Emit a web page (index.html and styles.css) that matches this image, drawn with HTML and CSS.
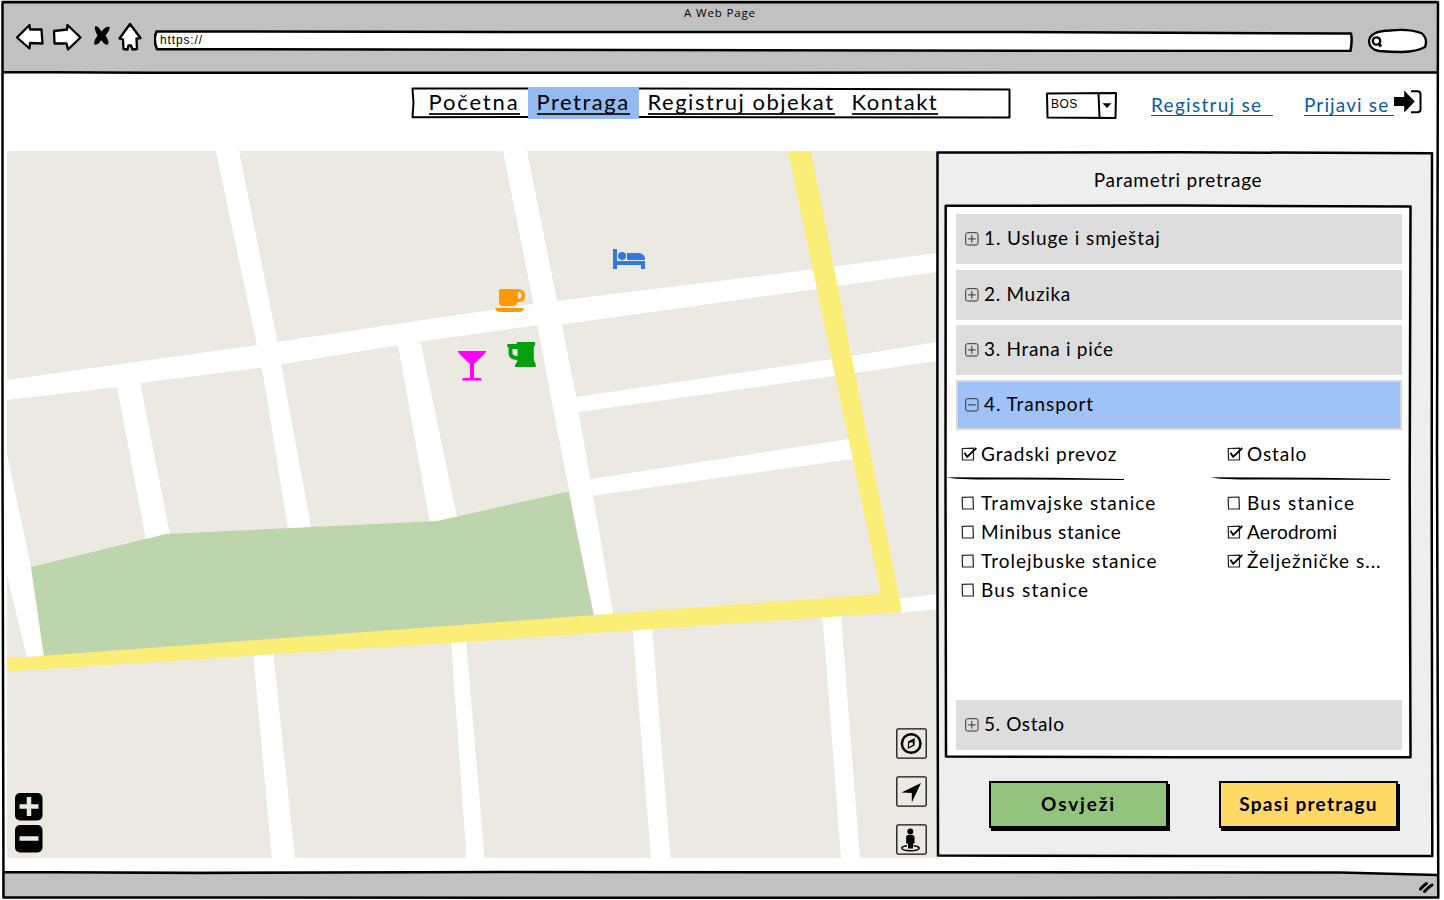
FILE: index.html
```html
<!DOCTYPE html>
<html lang="bs">
<head>
<meta charset="utf-8">
<title>A Web Page</title>
<link rel="stylesheet" href="styles.css">
</head>
<body>
<svg class="defs" width="0" height="0" aria-hidden="true">
  <symbol id="plus" viewBox="0 0 14 14"><rect x=".7" y=".7" width="12.300" height="12.300" rx="1.8"/><path d="M6.800 3v7.800M2.900 6.900h7.800"/></symbol>
  <symbol id="minus" viewBox="0 0 14 14"><rect x=".7" y=".7" width="12.300" height="12.300" rx="1.8"/><path d="M2.900 6.900h7.800"/></symbol>
  <symbol id="box" viewBox="0 0 16 16"><path d="M1.2 2.3 12 2l.4 12L1.5 13.8Z"/></symbol>
  <symbol id="checked" viewBox="0 0 16 16"><path d="M1.2 2.5 12.4 2.2 12.5 14 1.5 13.8Z"/><path class="tick" d="M3.4 6.7 6.2 10.8 15.300 2"/></symbol>
</svg>

<div class="window">
  <header class="chrome">
    <div class="chrome-title">A Web Page</div>
    <div class="toolbar">
      <svg class="nav-icons" width="130" height="32" viewBox="14 21 130 32">
        <path d="M17 37.500 29.500 25 30 29.500 41.500 29.500 42.500 43.500 30 43 29.500 48.500Z"/>
        <path d="M54 31 67 29.500 67.500 25 80.500 37.500 68 49.500 66.500 43.500 54.500 43.500Z"/>
        <path class="solid" d="M95 26.500Q98 25.500 101.500 31.500 106 25.500 109.500 27 110.500 29 105.500 35.500 109.500 41 108 44.500 104.500 45.500 101.300 40 98 45.500 94.500 44.500 93 42 97.500 35.500 94 29 95 26.500Z"/>
        <path d="M130 24 140.500 38 136.500 38.500 137 49 132.500 49.500 131 45.500 128.500 45.500 127.500 49.500 123.500 49 123 39.500 119.500 38.500Z"/>
      </svg>
      <div class="address">
        <span>https://</span>
        <svg class="sketch" viewBox="154 30 1199 22"><path class="corner" d="M600 30H1353V33.500L1000 32 600 32Z"/><path class="ink" d="M156 31.800 157 31.500 600 32 1000 32 1351 33.500Q1352.500 40 1350.500 51L900 50.500 157 49.200Q153 40 156.500 31.500"/></svg>
      </div>
      <svg class="finder" width="62" height="26" viewBox="1367 28 62 26">
        <path class="pill" d="M1369 41Q1370 31 1390 30.500 1410 28.500 1422 33.500 1428 39 1425 47 1417 51.500 1402 52 1390 52 1379 51 1369 49 1369 41Z"/>
        <circle cx="1376.500" cy="41" r="3.700"/><path class="handle" d="M1378.500 43.500 1381 46.500"/>
      </svg>
    </div>
  </header>

  <div class="topbar">
    <nav class="menu">
      <a><span class="tr20">Početna</span></a>
      <a class="active"><span class="tr16">Pretraga</span></a>
      <a><span class="tr16">Registruj objekat</span></a>
      <a><span class="tr16">Kontakt</span></a>
      <svg class="sketch" viewBox="411 87 600 32"><path class="ink2" d="M528 88.500H412.500L413.500 103 412.500 117.300 528 117M639 88.500 1009.500 89.500 1009.500 117.500 639 117"/></svg>
    </nav>
    <div class="language">
      <span>BOS</span>
      <svg class="sketch" viewBox="1046 92 71 27"><path class="ink2" d="M1047 93.500 1116 93 1115.500 118 1047.500 117.500ZM1098.500 93.500 1099.500 117.500"/><path d="M1102.500 103.200h9l-4.500 4.800z"/></svg>
    </div>
    <a class="link register tr13">Registruj se</a>
    <a class="link login tr11">Prijavi se</a>
    <svg class="login-icon" width="30" height="26" viewBox="1393 89 30 26"><path d="M1394 97h10.200v-6.500L1414.800 101.500 1404.200 112.500V106H1394Z"/><path class="bracket" d="M1411 91.300h6.500q3 0 3 3v15q0 3-3 3H1411"/></svg>
  </div>

  <main class="main">
    <section class="map">
      <svg width="930" height="707" viewBox="7 151 930 707">
        <rect class="land" x="7" y="151" width="930" height="707"/>
        <g class="road">
          <path d="M216 151H239L277 340 284 380 311 527 309 532H288.500L264 380 257 345Z"/>
          <path d="M503 151H527L557 301 576 396 613 613V618H594L551.500 400 533.500 304Z"/>
          <path d="M7 380 257 345 440 317.500 533 304 670 287 816 269 937 253V272L819 288.500 670 309.500 561 324.500 538 325 420 341.500 262 367.500 140 383 117 387 7 400Z"/>
          <path d="M117 386 140 382 170 535 166 540H146Z"/>
          <path d="M398 345 420 340 457 517 450 523H430Z"/>
          <path d="M7 454 31 567 46 660H27.500L7 575Z"/>
          <path d="M573 397.500 833 359 937 342V361L838 375.500 575 412.500Z"/>
          <path d="M588 479.500 849 439 868 445 872 458 853 459 594 495.500Z"/>
          <path d="M896 599 937 594V609L900 613Z"/>
          <path d="M253 652H273L295 858H272Z"/>
          <path d="M451 640H466L484.500 858H466.500Z"/>
          <path d="M632.500 628H652L670.500 858H651Z"/>
          <path d="M822.500 616H841L860 858H841Z"/>
        </g>
        <path class="park" d="M31 567 166 534 437 521 568.500 491.500 594 616 44 657Z"/>
        <path class="highway" d="M788 151H811L902 612 480 641 7 671.500V658.500L480 623.500 881 594Z"/>
        <g fill="#2f78e3"><path d="M613 249h4v12h28v8h-4v-4h-24v4h-4z"/><circle cx="622" cy="256" r="4"/><path d="M627 253h11q7 0 7 7h-18z"/></g>
        <path fill="#ff9900" fill-rule="evenodd" d="M499 291q0-2 2-2h16q8 0 8 6.700t-8 6.500q0 3.800-4 3.800h-10q-4 0-4-4zM518 292v7q3.500 0 3.500-3.500t-3.500-3.500zM495 308h29q-1 4-5 4h-19q-4 0-5-4z"/>
        <path fill="#04a010" fill-rule="evenodd" d="M507.300 344h9.500v-2H535v4h-1.200v14.500q2.200 2 2.200 6.500h-21q0-4 2.200-5v-2Q508 360 508.500 352v-5h-1.200zM512.500 349v4q0 3 5 3v-7z"/>
        <path fill="#ff00ff" d="M457.500 351h29q-1 2.500-12.500 13v14h6.500q1 0 1 2.500h-19.200q0-2.500 1-2.500h6.700V364Q458.500 353.500 457.500 351z"/>
      </svg>
      <div class="zoom">
        <svg width="28" height="28" viewBox="0 0 28 28"><rect width="27.500" height="27.500" rx="5"/><path d="M4.500 13.500h19M14 4v19"/></svg>
        <svg width="28" height="28" viewBox="0 0 28 28"><rect width="27.500" height="27.500" rx="5"/><path d="M4.500 13.500h19"/></svg>
      </div>
      <div class="tools">
        <svg width="31" height="31" viewBox="0 0 31 31"><rect class="tile" x=".8" y=".8" width="29.400" height="29.400" rx="1.500"/><circle class="ring" cx="15.200" cy="15.500" r="9.300"/><path fill-rule="evenodd" d="M18.800 10 18.500 17.500 11.800 21 12 13.500ZM16.500 14l-3.300 1-.2 4 4-2.200z"/></svg>
        <svg width="31" height="31" viewBox="0 0 31 31"><rect class="tile" x=".8" y=".8" width="29.400" height="29.400" rx="1.500"/><path d="M25 7 15.800 26.500V17L5.500 16.500Z"/></svg>
        <svg width="31" height="31" viewBox="0 0 31 31"><rect class="tile" x=".8" y=".8" width="29.400" height="29.400" rx="1.500"/><circle cx="14.300" cy="7.500" r="3"/><path d="M12 11h4.500q2 0 2 2v6.500H17v5h-5v-5h-1.800V13q0-2 1.800-2z"/><path class="base" d="M11 21.700q-5.500.7-5.300 2.500.5 2.500 8.500 2.500t9-2.500q-.2-1.900-5.700-2.500"/></svg>
      </div>
    </section>

    <aside class="panel">
      <h1>Parametri pretrage</h1>
      <div class="accordion">
        <div class="group"><svg><use href="#plus"/></svg><span class="tr9">1. Usluge i smještaj</span></div>
        <div class="group second"><svg><use href="#plus"/></svg><span class="tr7">2. Muzika</span></div>
        <div class="group"><svg><use href="#plus"/></svg><span class="tr7">3. Hrana i piće</span></div>
        <div class="group open"><svg><use href="#minus"/></svg><span class="tr9">4. Transport</span></div>
        <div class="options">
          <div class="column">
            <div class="option lead"><svg><use href="#checked"/></svg><span class="tr9">Gradski prevoz</span></div>
            <svg class="rule" width="180" height="4" viewBox="0 0 180 4"><path d="M0 .3 60 .4 110 .7 178 2V3L120 2.800 60 2.400 30 2.600 10 1.800Z"/></svg>
            <div class="option"><svg><use href="#box"/></svg><span class="tr11">Tramvajske stanice</span></div>
            <div class="option"><svg><use href="#box"/></svg><span class="tr7">Minibus stanice</span></div>
            <div class="option"><svg><use href="#box"/></svg><span class="tr10">Trolejbuske stanice</span></div>
            <div class="option"><svg><use href="#box"/></svg><span class="tr13">Bus stanice</span></div>
          </div>
          <div class="column">
            <div class="option lead"><svg><use href="#checked"/></svg><span class="tr9">Ostalo</span></div>
            <svg class="rule" width="180" height="4" viewBox="0 0 180 4"><path d="M0 .2 60 .4 110 .7 180 2V3L120 2.800 60 2.400 30 2.600 10 1.800Z"/></svg>
            <div class="option"><svg><use href="#box"/></svg><span class="tr13">Bus stanice</span></div>
            <div class="option"><svg><use href="#checked"/></svg><span class="tr2">Aerodromi</span></div>
            <div class="option"><svg><use href="#checked"/></svg><span class="tr10">Želježničke s...</span></div>
          </div>
        </div>
        <div class="group"><svg><use href="#plus"/></svg><span class="tr6">5. Ostalo</span></div>
        <svg class="sketch" viewBox="944 204 468 555"><path class="ink" d="M945.700 205.800 1180 205.600 1410.500 206.500 1409.700 480 1410.500 757.300 1180 757.300 946 756.500 945.500 480Z"/></svg>
      </div>
      <div class="actions">
        <button class="refresh"><span class="tr18">Osvježi</span></button>
        <button class="save"><span class="tr13">Spasi pretragu</span></button>
      </div>
      <svg class="sketch" viewBox="936 151 498 707"><path class="ink" d="M937.500 152.500 1180 152.300 1432 153.200 1431.700 500 1432.300 856 1180 856 938 855.500 937.300 500Z"/></svg>
    </aside>
  </main>

  <footer class="status"></footer>
  <svg class="sketch frame" viewBox="0 0 1440 900">
    <path class="paper" d="M1200 870H1437V874.500L1360 872.500Z"/>
    <path class="ink" d="M2.500 2.300 1438 2.300 1437 450 1438.300 897.500 700 897.800 3.500 897.500 2.500 450ZM3 72 150 72.800 1437 72.500M3 872 200 873 500 872 1340 872.500 1437 875"/>
    <path class="grip" d="M1420.500 889Q1424 885 1426.500 883.500M1424.500 891.500Q1430 886 1432 885"/>
  </svg>
</div>
</body>
</html>
```
FILE: styles.css
```css
* { box-sizing: border-box; }
body {
  margin: 0;
  background: #fff;
  color: #000;
  font-family: Lato, "Open Sans", sans-serif;
  font-size: 19px;
}
svg { display: block; flex: none; }
.defs { position: absolute; }

.tr2 { letter-spacing: .24px; }
.tr6 { letter-spacing: .6px; }
.tr7 { letter-spacing: .69px; }
.tr9 { letter-spacing: .9px; }
.tr10 { letter-spacing: 1px; }
.tr11 { letter-spacing: 1.13px; }
.tr13 { letter-spacing: 1.28px; }
.tr16 { letter-spacing: 1.5px; }
.tr18 { letter-spacing: 1.84px; }
.tr20 { letter-spacing: 1.85px; }

.window {
  position: relative;
  display: flex;
  flex-direction: column;
  width: 1440px;
  height: 900px;
}

/* hand-drawn outlines laid over their boxes */
.sketch {
  position: absolute;
  inset: 0;
  width: 100%;
  height: 100%;
  pointer-events: none;
}
.ink { fill: none; stroke: #000; stroke-width: 2.5; stroke-linejoin: round; }
.ink2 { fill: none; stroke: #000; stroke-width: 2; stroke-linejoin: round; }
.paper { fill: #fff; }
.corner { fill: #c1c1c1; }
.grip { fill: none; stroke: #000; stroke-width: 3; stroke-linecap: round; }

/* browser chrome */
.chrome {
  height: 73px;
  margin: 0 2px;
  padding-top: 4px;
  background: #c1c1c1;
}
.chrome-title {
  height: 17px;
  font-family: "Open Sans", sans-serif;
  font-size: 11.500px;
  line-height: 18px;
  letter-spacing: .85px;
  text-align: center;
}
.toolbar { display: flex; padding-left: 12px; }
.nav-icons path { fill: #fff; stroke: #000; stroke-width: 2.3; stroke-linejoin: round; }
.nav-icons .solid { fill: #000; stroke: none; }
.address {
  position: relative;
  width: 1199px;
  height: 22px;
  margin: 9px 14px 0 10px;
  padding-left: 6px;
  background: linear-gradient(#fff, #fff) 2px 1px / 1195px 19px no-repeat;
  font-family: "Liberation Sans", sans-serif;
  font-size: 12px;
  line-height: 21px;
  letter-spacing: .85px;
}
.finder { margin-top: 7px; fill: none; stroke: #000; stroke-width: 2.300; }
.finder .pill { fill: #fff; }
.finder .handle { stroke-width: 3; }

/* site header */
.topbar {
  display: flex;
  align-items: flex-start;
  height: 78px;
  padding: 14px 0 0 411px;
}
.menu {
  position: relative;
  display: grid;
  grid-template-columns: 108px 111px 204px 1fr;
  width: 600px;
  height: 32px;
  padding-left: 9px;
  font-size: 22px;
}
.menu a { padding-left: 8.500px; }
.menu .active { background: #94baf2; }
.menu a span {
  display: inline-block;
  height: 28px;
  border-bottom: 2px solid #222;
  line-height: 29px;
}
.language {
  position: relative;
  width: 71px;
  height: 27px;
  margin: 5px 34px 0 35px;
  padding-left: 5px;
  font-family: "Liberation Sans", sans-serif;
  font-size: 12px;
  line-height: 25px;
  letter-spacing: .4px;
}
.link {
  height: 22px;
  margin-top: 7px;
  border-bottom: 1.500px solid #0b5394;
  color: #0b5aa5;
  line-height: 22px;
  white-space: nowrap;
}
.register { width: 122px; margin-right: 31px; }
.login { width: 90px; }
.login-icon { margin-top: 2px; margin-left: -1px; }
.bracket { fill: none; stroke: #000; stroke-width: 2; }

/* map */
.main { display: flex; height: 720px; padding-left: 7px; }
.map { position: relative; width: 929px; height: 707px; }
.land { fill: #ece9e2; }
.road { fill: #fff; }
.park { fill: #bdd5ad; }
.highway { fill: #faee77; }
.zoom {
  position: absolute;
  left: 8px;
  bottom: 5px;
  display: grid;
  gap: 4px;
}
.zoom path { stroke: #ece9e2; stroke-width: 4.500; }
.tools {
  position: absolute;
  right: 9px;
  bottom: 3px;
  display: grid;
  gap: 17px;
}
.tile { fill: none; stroke: #111; stroke-width: 1.300; }
.ring { fill: none; stroke: #000; stroke-width: 2.500; }
.base { fill: none; stroke: #000; stroke-width: 1.500; }

/* search panel */
.panel {
  position: relative;
  width: 498px;
  height: 707px;
  padding: 0 0 0 8px;
  background: linear-gradient(#eee, #eee) 1px 1px / 495px 704px no-repeat;
}
.panel h1 {
  height: 53px;
  margin: 0;
  padding: 0 22px 0 0;
  font-size: 19px;
  font-weight: 400;
  letter-spacing: .74px;
  line-height: 58px;
  text-align: center;
}
.accordion {
  position: relative;
  width: 468px;
  height: 555px;
  padding: 10px 10px 0 12px;
  background: linear-gradient(#fff, #fff) 1px 1px / 465px 552px no-repeat;
}
.group {
  display: flex;
  align-items: center;
  gap: 5px;
  height: 50px;
  margin-bottom: 5px;
  padding-left: 9px;
  background: #ddd;
  line-height: 46px;
}
.group span { height: 48px; }
.group:first-child { margin-bottom: 6px; }
.group.open { margin: 0; padding-left: 7px; border: 2px solid #d8d8d8; background: #9fc3f8; }
.group svg { width: 14px; height: 14px; fill: none; stroke: #333; stroke-width: 1; }
.options {
  display: grid;
  grid-template-columns: 264px 180px;
  height: 270px;
  margin-left: -10px;
  padding-top: 9px;
}
.option {
  display: flex;
  align-items: center;
  gap: 5px;
  height: 29px;
  padding-left: 15px;
  white-space: nowrap;
}
.column + .column .option { padding-left: 17px; }
.option svg { width: 16px; height: 16px; margin-right: -1px; fill: none; stroke: #222; stroke-width: 1.200; }
.option .tick, .tick { stroke: #000; stroke-width: 1.800; }
.rule { margin: 9px 0 7px; }
.actions { display: flex; gap: 51px; padding: 22px 0 0 45px; }
.actions button {
  width: 179px;
  height: 47px;
  border: 2.500px solid #000;
  padding: 0 0 2px;
  box-shadow: 2px 3px 0 #000;
  color: #000;
  font: 700 19px Lato, "Open Sans", sans-serif;
}
.refresh { background: #93c47d; }
.save { background: #ffd966; }

.status { height: 26px; margin: 0 2px; background: #c1c1c1; }
```
